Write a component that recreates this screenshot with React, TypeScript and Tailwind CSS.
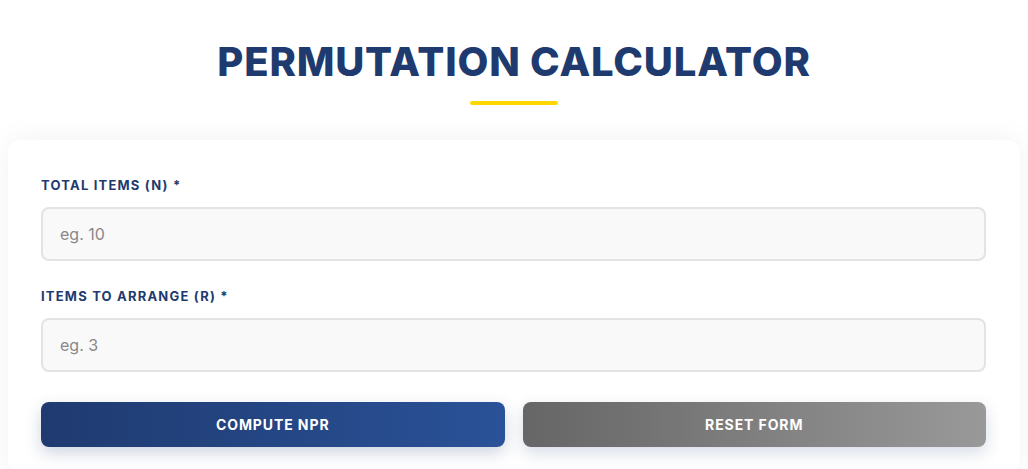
export default function App() {
  return (
    <div className="min-h-screen bg-white font-['Inter','Noto_Sans',sans-serif]">
      {/* Heading */}
      <div className="flex flex-col items-center pt-[38px]">
        <h1 className="text-[40px] leading-[48px] font-extrabold tracking-[0.8px] text-[#1e3a6e]">
          PERMUTATION CALCULATOR
        </h1>
        <div className="mt-[15px] h-1 w-[88px] rounded-full bg-[#ffd700]"></div>
      </div>

      {/* Form card */}
      <div className="mx-2 mt-[35px] rounded-xl bg-white pl-[33px] pr-[34px] pt-[35px] pb-6 shadow-[0_0_30px_rgba(0,0,0,0.06)]">
        <label className="block text-[13px] leading-5 font-bold tracking-[1.2px] text-[#1e3a6e]">
          TOTAL ITEMS (N) *
        </label>
        <input
          type="text"
          placeholder="eg. 10"
          className="mt-3 block h-[54px] w-full rounded-lg border-2 border-[#e3e3e3] bg-[#f9f9f9] px-[17px] text-[16px] text-gray-700 outline-none placeholder:text-[#888]"
        />

        <label className="mt-[25px] block text-[13px] leading-5 font-bold tracking-[1.2px] text-[#1e3a6e]">
          ITEMS TO ARRANGE (R) *
        </label>
        <input
          type="text"
          placeholder="eg. 3"
          className="mt-3 block h-[54px] w-full rounded-lg border-2 border-[#e3e3e3] bg-[#f9f9f9] px-[17px] text-[16px] text-gray-700 outline-none placeholder:text-[#888]"
        />

        <div className="mt-[30px] grid grid-cols-2 gap-[18px]">
          <button className="h-[45px] rounded-lg bg-gradient-to-r from-[#1f3a70] to-[#2a5298] text-[14px] font-bold tracking-[0.9px] text-white shadow-[0_6px_16px_rgba(30,60,114,0.22)]">
            COMPUTE NPR
          </button>
          <button className="h-[45px] rounded-lg bg-gradient-to-r from-[#666666] to-[#999999] text-[14px] font-bold tracking-[0.9px] text-white shadow-[0_6px_16px_rgba(30,60,114,0.18)]">
            RESET FORM
          </button>
        </div>
      </div>
    </div>
  );
}
